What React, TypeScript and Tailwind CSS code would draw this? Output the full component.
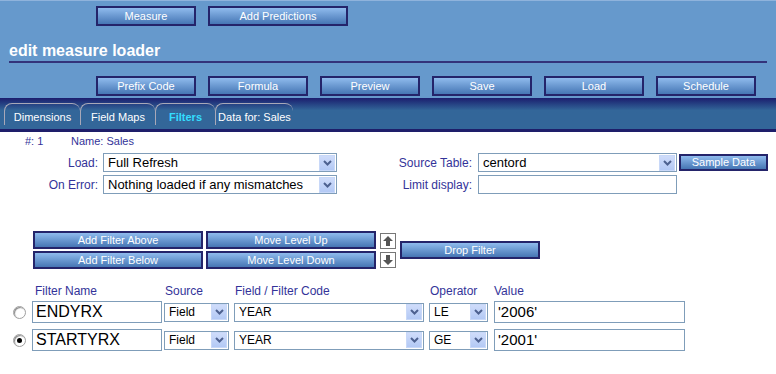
const font = "font-['Liberation_Sans',Arial,sans-serif]";

function Btn({ label, w, h = "h-[20px]" }: { label: string; w: string; h?: string }) {
  return (
    <div
      className={`${w} ${h} flex items-center justify-center border-2 border-[#24246a] bg-gradient-to-b from-[#8fbbed] to-[#4676b4] text-[11px] text-white`}
    >
      {label}
    </div>
  );
}

function Chevron() {
  return (
    <div className="flex h-[16px] w-[16px] items-center justify-center border border-[#c8d8f8] bg-gradient-to-b from-[#cfdcfa] to-[#b3c9f5]">
      <svg width="9" height="6" viewBox="0 0 9 6">
        <path d="M1 1 L4.5 4.5 L8 1" stroke="#4d6190" strokeWidth="2" fill="none" />
      </svg>
    </div>
  );
}

function Select({ value, w, text = "text-[13px]" }: { value: string; w: string; text?: string }) {
  return (
    <div className={`${w} flex h-[19px] items-center border border-[#7f9db9] bg-white pl-[4px] pr-[1px]`}>
      <span className={`flex-1 ${text} text-black`}>{value}</span>
      <Chevron />
    </div>
  );
}

function ArrowBox({ up }: { up: boolean }) {
  return (
    <div className="flex h-[16px] w-[16px] items-center justify-center border border-[#777] bg-white">
      <svg width="12" height="12" viewBox="0 0 12 12">
        {up ? (
          <path d="M6 1 L11 6 L8 6 L8 11 L4 11 L4 6 L1 6 Z" fill="#555" />
        ) : (
          <path d="M6 11 L11 6 L8 6 L8 1 L4 1 L4 6 L1 6 Z" fill="#555" />
        )}
      </svg>
    </div>
  );
}

function Radio({ on }: { on: boolean }) {
  return (
    <div className="flex h-[13px] w-[13px] items-center justify-center rounded-full border border-[#a0a0a0] bg-white shadow-[inset_1px_1px_1px_#888]">
      {on && <div className="h-[5px] w-[5px] rounded-full bg-black" />}
    </div>
  );
}

function FilterRow({ on, name, op, value }: { on: boolean; name: string; op: string; value: string }) {
  return (
    <div className="flex items-center">
      <div className="ml-[13px] mr-[6px]">
        <Radio on={on} />
      </div>
      <div className="flex h-[22px] w-[130px] items-center border border-[#7f9db9] pl-[3px] text-[16px] text-black">{name}</div>
      <div className="ml-[2px]">
        <Select value="Field" w="w-[65px]" text="text-[12px]" />
      </div>
      <div className="ml-[5px]">
        <Select value="YEAR" w="w-[190px]" text="text-[12px]" />
      </div>
      <div className="ml-[5px]">
        <Select value={op} w="w-[59px]" text="text-[12px]" />
      </div>
      <div className="ml-[6px] flex h-[22px] w-[191px] items-center border border-[#7f9db9] pl-[3px] text-[15px] text-black">
        {value}
      </div>
    </div>
  );
}

export default function App() {
  const topBtns = ["Prefix Code", "Formula", "Preview", "Save", "Load", "Schedule"];
  const tabs = [
    { label: "Dimensions", w: "w-[76px]" },
    { label: "Field Maps", w: "w-[75px]" },
    { label: "Filters", w: "w-[60px]", active: true },
    { label: "Data for: Sales", w: "w-[78px]" },
  ];
  return (
    <div className={`${font} h-[374px] w-[776px] overflow-hidden bg-white`}>
      <div className="h-[98px] border-t border-[#8fb3dc] bg-[#6699cc] pt-[5px]">
        <div className="flex gap-[12px] pl-[96px]">
          <Btn label="Measure" w="w-[100px]" />
          <Btn label="Add Predictions" w="w-[140px]" />
        </div>
        <div className="mx-[9px] mt-[15px] border-b-2 border-[#33337a] pb-[1px] text-[16px] font-bold leading-[19px] text-white">
          edit measure loader
        </div>
        <div className="mt-[13px] flex gap-[12px] pl-[96px]">
          {topBtns.map((b) => (
            <Btn key={b} label={b} w="w-[100px]" />
          ))}
        </div>
      </div>
      <div className="h-[31px] bg-gradient-to-b from-[#1c1c6e] via-[#336699] via-40% to-[#336699] pt-[5px]">
        <div className="flex pl-[4px]">
          {tabs.map((t) => (
            <div
              key={t.label}
              className={`${t.w} flex h-[22px] items-end justify-center whitespace-nowrap rounded-tl-[8px] rounded-tr-[8px] border-t border-l border-[#a8a8b8] pb-[1px] text-[11px] leading-[13px] ${
                t.active ? "font-bold text-[#33ddff]" : "text-white"
              }`}
            >
              {t.label}
            </div>
          ))}
        </div>
      </div>
      <div className="h-[3px] bg-[#1e1e6a]" />

      <div className="mt-[2px] flex text-[11px] leading-[14px] text-[#333399]">
        <span className="ml-[25px] w-[46px]">#: 1</span>
        <span>Name: Sales</span>
      </div>

      <div className="mt-[5px] flex">
        <div className="flex flex-col gap-[3px]">
          <div className="flex items-center">
            <span className="w-[100px] pr-[2px] text-right text-[12px] text-[#333399]">Load:</span>
            <div className="ml-[3px]">
              <Select value="Full Refresh" w="w-[234px]" />
            </div>
          </div>
          <div className="flex items-center">
            <span className="w-[100px] pr-[2px] text-right text-[12px] text-[#333399]">On Error:</span>
            <div className="ml-[3px]">
              <Select value="Nothing loaded if any mismatches" w="w-[234px]" />
            </div>
          </div>
        </div>
        <div className="flex flex-col gap-[3px]">
          <div className="flex items-center">
            <span className="w-[137px] pr-[2px] text-right text-[12px] text-[#333399]">Source Table:</span>
            <div className="ml-[4px]">
              <Select value="centord" w="w-[199px]" />
            </div>
            <div className="ml-[2px]">
              <Btn label="Sample Data" w="w-[89px]" h="h-[17px]" />
            </div>
          </div>
          <div className="flex items-center">
            <span className="w-[137px] pr-[2px] text-right text-[12px] text-[#333399]">Limit display:</span>
            <div className="ml-[4px] h-[19px] w-[199px] border border-[#7f9db9]" />
          </div>
        </div>
      </div>

      <div className="mt-[37px] flex items-center">
        <div className="ml-[33px] flex flex-col gap-[2px]">
          <div className="flex gap-[3px]">
            <Btn label="Add Filter Above" w="w-[170px]" h="h-[18px]" />
            <Btn label="Move Level Up" w="w-[170px]" h="h-[18px]" />
          </div>
          <div className="flex gap-[3px]">
            <Btn label="Add Filter Below" w="w-[170px]" h="h-[18px]" />
            <Btn label="Move Level Down" w="w-[170px]" h="h-[18px]" />
          </div>
        </div>
        <div className="ml-[4px] flex flex-col gap-[3px]">
          <ArrowBox up />
          <ArrowBox up={false} />
        </div>
        <div className="ml-[4px]">
          <Btn label="Drop Filter" w="w-[140px]" h="h-[18px]" />
        </div>
      </div>

      <div className="mt-[13px] flex text-[12px] text-[#333399]">
        <span className="ml-[35px] w-[130px]">Filter Name</span>
        <span className="w-[70px]">Source</span>
        <span className="w-[195px]">Field / Filter Code</span>
        <span className="w-[64px]">Operator</span>
        <span>Value</span>
      </div>
      <div className="mt-[1px] flex flex-col gap-[6px]">
        <FilterRow on={false} name="ENDYRX" op="LE" value="'2006'" />
        <FilterRow on name="STARTYRX" op="GE" value="'2001'" />
      </div>
    </div>
  );
}
